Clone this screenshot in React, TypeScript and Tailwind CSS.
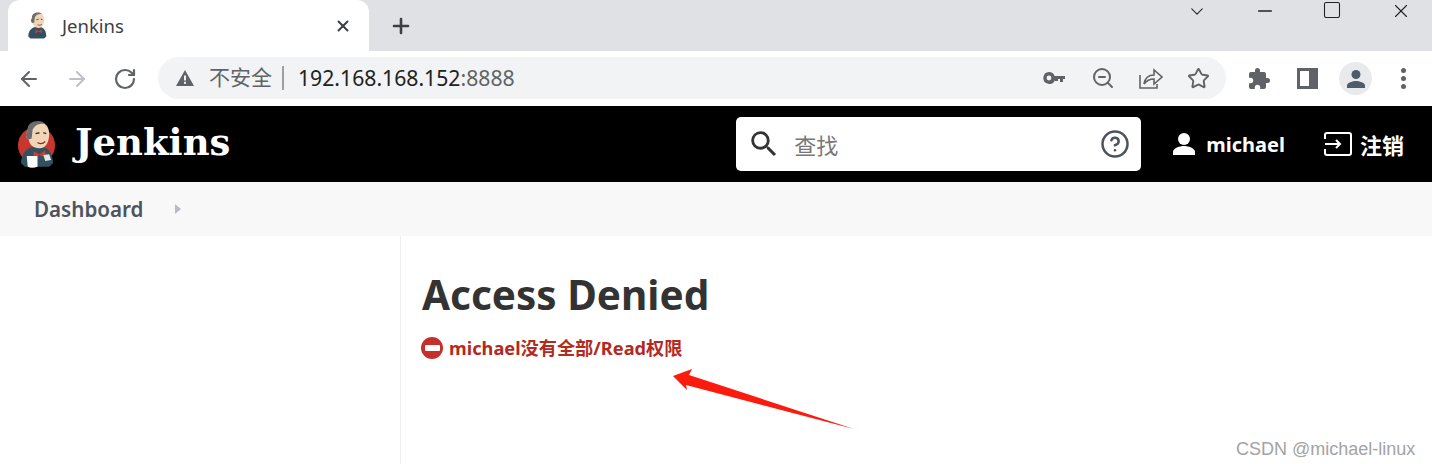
import { ArrowLeft, ArrowRight, RotateCw, Plus, X, CircleHelp, Minus, ChevronDown, Square, Star, ZoomOut } from "lucide-react";

const uiFont = "font-['Noto_Sans','Noto_Sans_CJK_SC',sans-serif]";

// Jenkins butler, drawn by hand
function Butler({ size, ring }: { size: number; ring?: boolean }) {
  return (
    <svg width={size} height={size * 1.25} viewBox="0 0 40 50">
      {ring && <circle cx="20" cy="26" r="19" fill="#c8372d" />}
      <path d="M4 44 C5 32 12 27 21 27 C30 27 36 31 37 44 L33 48 H8 Z" fill="#335061" />
      <path d="M11 11 C11 4 17 2 22 2 C29 2 33 7 33 14 C33 22 30 29 23 29 C16 29 13 25 12 20 C9 19 8 14 11 11 Z" fill="#f0d6b7" />
      <path d="M11 11 C10 4 16 1 22 1 C25 1 27 2 29 4 C23 3 18 5 16 10 L15 19 L12 20 C9 19 8 14 11 11 Z" fill="#6d6b6d" />
      <path d="M19 14 L23 13 M27 13 L30 14" stroke="#333" strokeWidth="1.5" fill="none" />
      <path d="M21 23 C24 25 27 24 29 22" stroke="#8a2a22" strokeWidth="1.3" fill="none" />
      <path d="M17 32 L23 35 L29 31 L29 38 L23 36 L17 39 Z" fill="#d33833" />
      {ring && <path d="M10 37 H21 V48 Q15 50 11 48 Z" fill="#fff" />}
      {ring && <path d="M27 36 L33 35 L35 41 L29 42 Z" fill="#e8e8e8" />}
    </svg>
  );
}

function Tab() {
  return (
    <div className="relative ml-2 flex h-[51px] w-[361px] items-center rounded-t-[12px] bg-white pl-[18px] pr-[17px]">
      <Butler size={22} />
      <span className="ml-[14px] text-[18.5px] text-[#3c4043]">Jenkins</span>
      <X className="ml-auto text-[#3c4043]" size={18} strokeWidth={2.6} />
    </div>
  );
}

function KeyIcon() {
  return (
    <svg width="22" height="12" viewBox="0 0 22 12" fill="#5f6368">
      <path d="M6 0a6 6 0 0 1 5.600 4H22v3h-2v3h-3V7h-2v2h-3V8A6 6 0 1 1 6 0Zm0 3.600a2.400 2.400 0 1 0 0 4.800 2.400 2.400 0 0 0 0-4.800Z" />
    </svg>
  );
}

function ShareIcon() {
  return (
    <svg width="24" height="22" viewBox="0 0 24 22" fill="none" stroke="#5f6368" strokeWidth="1.600">
      <path d="M1 8v13h17v-4" />
      <path d="M5 17c1-6 5-9 10-9V3l8 7-8 7v-5c-4 0-7 1-10 5Z" />
    </svg>
  );
}

function PuzzleIcon() {
  return (
    <svg width="24" height="24" viewBox="0 0 24 24" fill="#5f6368">
      <path d="M20.500 11H19V7a2 2 0 0 0-2-2h-4V3.500a2.500 2.500 0 0 0-5 0V5H4a2 2 0 0 0-2 2v3.800h1.500a2.700 2.700 0 0 1 0 5.400H2V20a2 2 0 0 0 2 2h3.800v-1.500a2.700 2.700 0 0 1 5.400 0V22H17a2 2 0 0 0 2-2v-4h1.500a2.500 2.500 0 0 0 0-5Z" />
    </svg>
  );
}

function SearchIcon() {
  return (
    <svg width="34" height="34" viewBox="0 0 24 24" fill="#333">
      <path d="M15.500 14h-.790l-.280-.270A6.470 6.470 0 0 0 16 9.500 6.500 6.500 0 1 0 9.500 16c1.610 0 3.090-.590 4.230-1.570l.270.280v.790l5 4.990L20.490 19l-4.990-5Zm-6 0C7.010 14 5 11.990 5 9.500S7.010 5 9.500 5 14 7.010 14 9.500 11.990 14 9.500 14Z" />
    </svg>
  );
}

function AddressBar() {
  return (
    <div className="ml-[21px] mb-[1px] flex h-[42px] w-[1068px] items-center rounded-full bg-[#f1f3f4] pl-[17px] pr-[16px]">
      <svg width="20" height="18" viewBox="0 0 20 18" fill="#5f6368">
        <path d="M10 1 19 17H1Z" />
        <rect x="9" y="6.500" width="2" height="5" fill="#f1f3f4" />
        <rect x="9" y="12.800" width="2" height="2" fill="#f1f3f4" />
      </svg>
      <span className="ml-[14px] text-[21px] text-[#5f6368]">不安全</span>
      <span className="ml-[10px] h-[24px] w-[2px] bg-[#9aa0a6]" />
      <span className="ml-[14px] text-[21.2px]">
        <span className="text-[#202124]">192.168.168.152</span>
        <span className="text-[#5f6368]">:8888</span>
      </span>
      <div className="ml-auto flex items-center text-[#5f6368]">
        <KeyIcon />
        <ZoomOut className="ml-[26px]" size={24} strokeWidth={2} />
        <div className="ml-[24px]">
          <ShareIcon />
        </div>
        <Star className="ml-[24px]" size={23} strokeWidth={2} />
      </div>
    </div>
  );
}

function Toolbar() {
  return (
    <div className="flex h-[55px] items-center bg-white pl-[17px]">
      <ArrowLeft className="text-[#5f6368]" size={24} strokeWidth={2} />
      <ArrowRight className="ml-[24px] text-[#bdc1c6]" size={24} strokeWidth={2} />
      <RotateCw className="ml-[24px] text-[#5f6368]" size={24} strokeWidth={2.2} />
      <AddressBar />
      <div className="ml-[21px]">
        <PuzzleIcon />
      </div>
      <div className="ml-[26px] h-[21px] w-[21px] border-[3px] border-r-[9px] border-[#5f6368]" />
      <div className="ml-[21px] flex h-[33px] w-[33px] items-center justify-center rounded-full bg-[#e8eaed]">
        <svg width="20" height="20" viewBox="0 0 20 20" fill="#4d5b6b">
          <circle cx="10" cy="5.500" r="4.500" />
          <path d="M1 19v-2.500c0-3 6-4.500 9-4.500s9 1.500 9 4.500V19Z" />
        </svg>
      </div>
      <div className="ml-[29px] flex flex-col gap-[3px]">
        <span className="h-[5px] w-[5px] rounded-full bg-[#5f6368]" />
        <span className="h-[5px] w-[5px] rounded-full bg-[#5f6368]" />
        <span className="h-[5px] w-[5px] rounded-full bg-[#5f6368]" />
      </div>
    </div>
  );
}

function JenkinsHeader() {
  return (
    <header className="flex h-[76px] items-center bg-black pl-[17px] pr-[28px]">
      <Butler size={39} ring />
      <span className="ml-[19px] mb-[4px] font-['DejaVu_Serif',serif] text-[37px] font-bold leading-none text-white">
        Jenkins
      </span>
      <div className="ml-auto flex h-[54px] w-[405px] items-center rounded-[5px] bg-white pl-[11px] pr-[11px]">
        <SearchIcon />
        <span className="ml-[13px] pt-[2px] text-[22px] text-[#777]">查找</span>
        <CircleHelp className="ml-auto text-[#4d545d]" size={30} strokeWidth={2} />
      </div>
      <svg className="ml-[31px]" width="24" height="24" viewBox="0 0 24 24" fill="#fff">
        <circle cx="12" cy="7" r="6" />
        <path d="M1 23v-3c0-4 7-6 11-6s11 2 11 6v3Z" />
      </svg>
      <span className="ml-[10px] pt-[2px] text-[20px] font-bold text-white">michael</span>
      <svg className="ml-[39px]" width="28" height="24" viewBox="0 0 28 24" fill="none" stroke="#fff" strokeWidth="2">
        <path d="M1 7V3a2 2 0 0 1 2-2h22a2 2 0 0 1 2 2v18a2 2 0 0 1-2 2H3a2 2 0 0 1-2-2v-4" />
        <path d="M1 12h15M12 8l4 4-4 4" />
      </svg>
      <span className="ml-[8px] pt-[2px] text-[22px] font-bold text-white">注销</span>
    </header>
  );
}

export default function App() {
  return (
    <div className={`relative h-[464px] w-[1432px] overflow-hidden bg-white ${uiFont}`}>
      <div className="relative flex h-[51px] items-center bg-[#dfe1e5]">
        <Tab />
        <Plus className="ml-[20px] text-[#3c4043]" size={24} strokeWidth={2.6} />
        <div className="ml-auto flex items-start self-start pr-[20px] text-[#222]">
          <ChevronDown className="pt-[1px]" size={22} strokeWidth={1.2} />
          <Minus className="ml-[46px]" size={22} strokeWidth={1.4} />
          <Square className="ml-[46px]" size={20} strokeWidth={1.3} />
          <X className="ml-[48px]" size={22} strokeWidth={1.2} />
        </div>
      </div>
      <Toolbar />
      <JenkinsHeader />
      <div className="flex h-[54px] items-center bg-[#f8f8f8] pl-[34px]">
        <span className="pt-[1px] text-[20.6px] font-semibold text-[#4d545d]">Dashboard</span>
        <span className="ml-[32px] h-0 w-0 border-y-[5px] border-l-[6px] border-y-transparent border-l-[#b8bcc2]" />
      </div>
      <div className="flex h-[228px]">
        <aside className="w-[401px] border-r border-[#eceef2]" />
        <main className="pl-[20px] pt-[29px]">
          <h1 className="ml-[1px] text-[40.5px] font-bold leading-[60px] text-[#333]">Access Denied</h1>
          <div className="mt-[9px] flex items-center gap-[6px]">
            <span className="flex h-[22px] w-[22px] items-center justify-center rounded-full bg-[#c4302b]">
              <span className="h-[6px] w-[15px] rounded-[1px] bg-white" />
            </span>
            <span className="pt-[1px] text-[18.2px] font-bold text-[#b32a1f]">michael没有全部/Read权限</span>
          </div>
        </main>
      </div>
      {/* red annotation arrow drawn over the screenshot */}
      <svg className="absolute left-[670px] top-[368px]" width="185" height="64" viewBox="0 0 185 64">
        <path d="M3 8 L22 1 L19 7 L184 61 L16 17 L17 22 Z" fill="#fb1b0f" />
      </svg>
      <span className="absolute left-[1236px] top-[436px] font-['Liberation_Sans',sans-serif] text-[18px] text-[#a3a3a3]">
        CSDN @michael-linux
      </span>
    </div>
  );
}
